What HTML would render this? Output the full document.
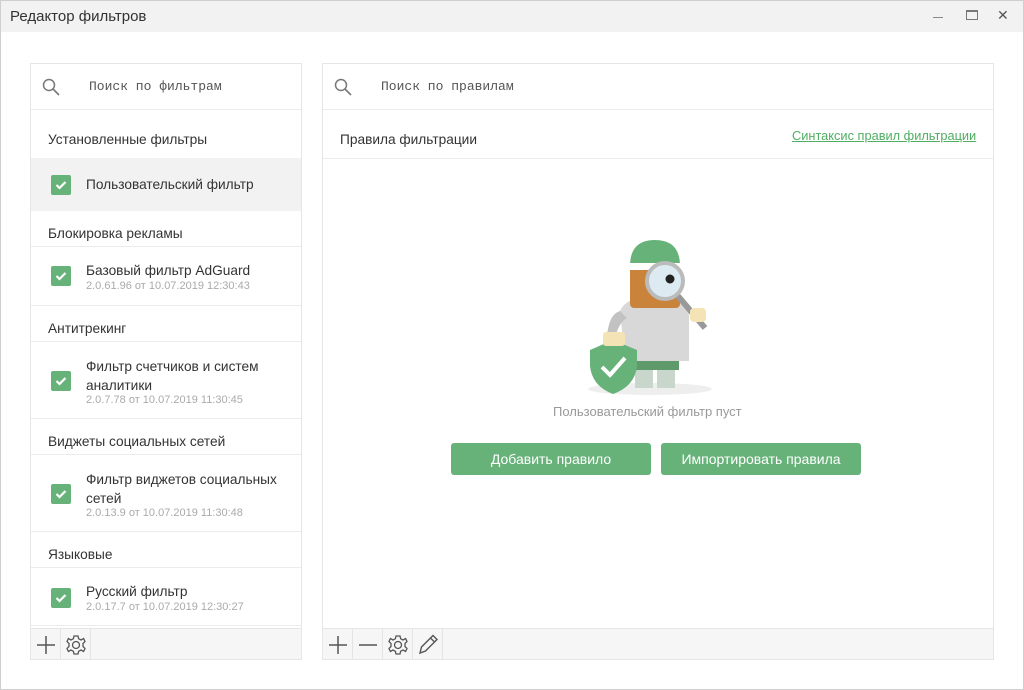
<!DOCTYPE html>
<html><head><meta charset="utf-8"><style>
*{margin:0;padding:0;box-sizing:border-box}
body{width:1024px;height:690px;position:relative;background:#fff;font-family:"Liberation Sans","Noto Sans CJK SC",sans-serif;color:#333;overflow:hidden}
.a{position:absolute}
.win{left:0;top:0;width:1024px;height:690px;border:1px solid #cfcfcf}
.title{left:1px;top:1px;width:1022px;height:31px;background:#f2f2f2}
.panel{border:1px solid #e6e6e6;background:#fff}
.hl{height:1px;background:#ececec}
.cb{width:20px;height:20px;background:#67b279;border-radius:2px}
.cb svg{position:absolute;left:4px;top:5px}
.fn{font-size:13.7px;color:#333}
.sub{font-size:11px;color:#aaa}
.grp{font-size:13.7px;color:#333}
.mono{font-family:"Liberation Mono",monospace;font-size:13px;color:#555}
.foot{background:#f6f6f6;border-top:1px solid #e6e6e6}
.btn{background:#67b279;color:#fff;font-size:14px;text-align:center;line-height:32px;border-radius:3px;height:32px}
.tb{width:30px;height:30px;border-right:1px solid #e4e4e4}
</style></head><body>
<div class="a win"></div>
<div class="a title"></div>
<div class="a" style="left:10px;top:8px;font-size:15px;color:#333">Редактор фильтров</div>
<div class="a" style="left:933px;top:17px;width:10px;height:1px;background:#888"></div>
<div class="a" style="left:966px;top:10px;width:12px;height:10px;border:1px solid #777;border-top-width:2px"></div>
<div class="a" style="left:997px;top:7px;font-size:14px;color:#555">✕</div>

<!-- left panel -->
<div class="a panel" style="left:30px;top:63px;width:272px;height:597px"></div>
<svg class="a" style="left:41px;top:77px" width="20" height="20"><circle cx="8" cy="8" r="5.5" fill="none" stroke="#777" stroke-width="1.5"/><line x1="12" y1="12" x2="18" y2="18" stroke="#777" stroke-width="1.6"/></svg>
<div class="a mono" style="left:89px;top:79px">Поиск по фильтрам</div>
<div class="a hl" style="left:31px;top:109px;width:270px"></div>
<div class="a grp" style="left:48px;top:132px">Установленные фильтры</div>
<div class="a" style="left:31px;top:158px;width:270px;height:53px;background:#f2f2f2"></div>
<div class="a cb" style="left:51px;top:175px"><svg width="12" height="10"><path d="M1.5 5 L4.5 8 L10.5 2" fill="none" stroke="#fff" stroke-width="2.2"/></svg></div>
<div class="a fn" style="left:86px;top:177px">Пользовательский фильтр</div>
<div class="a grp" style="left:48px;top:226px">Блокировка рекламы</div>
<div class="a hl" style="left:31px;top:246px;width:270px"></div>
<div class="a cb" style="left:51px;top:266px"><svg width="12" height="10"><path d="M1.5 5 L4.5 8 L10.5 2" fill="none" stroke="#fff" stroke-width="2.2"/></svg></div>
<div class="a fn" style="left:86px;top:263px">Базовый фильтр AdGuard</div>
<div class="a sub" style="left:86px;top:280px">2.0.61.96 от 10.07.2019 12:30:43</div>
<div class="a hl" style="left:31px;top:305px;width:270px"></div>
<div class="a grp" style="left:48px;top:321px">Антитрекинг</div>
<div class="a hl" style="left:31px;top:341px;width:270px"></div>
<div class="a cb" style="left:51px;top:371px"><svg width="12" height="10"><path d="M1.5 5 L4.5 8 L10.5 2" fill="none" stroke="#fff" stroke-width="2.2"/></svg></div>
<div class="a fn" style="left:86px;top:357px;line-height:19px">Фильтр счетчиков и систем<br>аналитики</div>
<div class="a sub" style="left:86px;top:394px">2.0.7.78 от 10.07.2019 11:30:45</div>
<div class="a hl" style="left:31px;top:418px;width:270px"></div>
<div class="a grp" style="left:48px;top:434px">Виджеты социальных сетей</div>
<div class="a hl" style="left:31px;top:454px;width:270px"></div>
<div class="a cb" style="left:51px;top:484px"><svg width="12" height="10"><path d="M1.5 5 L4.5 8 L10.5 2" fill="none" stroke="#fff" stroke-width="2.2"/></svg></div>
<div class="a fn" style="left:86px;top:470px;line-height:19px">Фильтр виджетов социальных<br>сетей</div>
<div class="a sub" style="left:86px;top:507px">2.0.13.9 от 10.07.2019 11:30:48</div>
<div class="a hl" style="left:31px;top:531px;width:270px"></div>
<div class="a grp" style="left:48px;top:547px">Языковые</div>
<div class="a hl" style="left:31px;top:567px;width:270px"></div>
<div class="a cb" style="left:51px;top:588px"><svg width="12" height="10"><path d="M1.5 5 L4.5 8 L10.5 2" fill="none" stroke="#fff" stroke-width="2.2"/></svg></div>
<div class="a fn" style="left:86px;top:584px">Русский фильтр</div>
<div class="a sub" style="left:86px;top:601px">2.0.17.7 от 10.07.2019 12:30:27</div>
<div class="a hl" style="left:31px;top:625px;width:270px"></div>
<div class="a foot" style="left:31px;top:628px;width:270px;height:31px"></div>
<div class="a tb" style="left:31px;top:629px"><svg width="30" height="30"><path d="M6 16 H24 M15 7 V25" stroke="#555" stroke-width="1.5"/></svg></div>
<div class="a tb" style="left:61px;top:629px"><svg width="30" height="30"><g transform="translate(15,16)" fill="none" stroke="#555" stroke-width="1.3"><circle r="3.5"/><path d="M-2 -9 H2 L2.6 -6.3 L5 -5 L7.6 -6.5 L9 -3.5 L7 -1.5 V1.5 L9 3.5 L7.6 6.5 L5 5 L2.6 6.3 L2 9 H-2 L-2.6 6.3 L-5 5 L-7.6 6.5 L-9 3.5 L-7 1.5 V-1.5 L-9 -3.5 L-7.6 -6.5 L-5 -5 L-2.6 -6.3 Z"/></g></svg></div>

<!-- right panel -->
<div class="a panel" style="left:322px;top:63px;width:672px;height:597px"></div>
<svg class="a" style="left:333px;top:77px" width="20" height="20"><circle cx="8" cy="8" r="5.5" fill="none" stroke="#777" stroke-width="1.5"/><line x1="12" y1="12" x2="18" y2="18" stroke="#777" stroke-width="1.6"/></svg>
<div class="a mono" style="left:381px;top:79px">Поиск по правилам</div>
<div class="a hl" style="left:323px;top:109px;width:670px"></div>
<div class="a grp" style="left:340px;top:132px">Правила фильтрации</div>
<div class="a" style="left:792px;top:128px;font-size:12.8px;color:#4fae63;text-decoration:underline">Синтаксис правил фильтрации</div>
<div class="a hl" style="left:323px;top:158px;width:670px"></div>

<svg class="a" style="left:585px;top:236px" width="135" height="162">
<ellipse cx="65" cy="153" rx="62" ry="6" fill="#eee"/>
<rect x="50" y="120" width="18" height="32" fill="#c9d6cc"/><rect x="72" y="120" width="18" height="32" fill="#c9d6cc"/>
<rect x="48" y="112" width="46" height="22" fill="#5f9a6a"/>
<path d="M35 75 Q40 64 55 62 H90 Q103 64 104 80 V125 H40 Z" fill="#d8d8d8"/>
<path d="M35 75 Q24 78 22 100 L30 102 Q34 86 42 82Z" fill="#c2c2c2"/>
<rect x="45" y="30" width="50" height="42" rx="4" fill="#c9833b"/>
<path d="M45 30 Q45 4 70 4 Q95 4 95 30 Z" fill="#67b279"/>
<rect x="44" y="27" width="52" height="7" fill="#fff"/>
<circle cx="80" cy="45" r="18" fill="#dcebf2" stroke="#bbb" stroke-width="4"/>
<circle cx="85" cy="43" r="4.5" fill="#222"/>
<line x1="93" y1="60" x2="120" y2="92" stroke="#999" stroke-width="6"/>
<rect x="105" y="72" width="16" height="14" rx="4" fill="#f3e3b5"/>
<path d="M5 114 L28 104 L52 114 V130 Q50 150 28 158 Q7 150 5 130Z" fill="#67b279"/>
<path d="M17 131 L25 139 L40 122" fill="none" stroke="#fff" stroke-width="4"/>
<rect x="18" y="96" width="22" height="14" rx="3" fill="#f3e3b5"/>
</svg>
<div class="a" style="left:553px;top:404px;font-size:13px;color:#999">Пользовательский фильтр пуст</div>
<div class="a btn" style="left:451px;top:443px;width:200px">Добавить правило</div>
<div class="a btn" style="left:661px;top:443px;width:200px">Импортировать правила</div>

<div class="a foot" style="left:323px;top:628px;width:670px;height:31px"></div>
<div class="a tb" style="left:323px;top:629px"><svg width="30" height="30"><path d="M6 16 H24 M15 7 V25" stroke="#555" stroke-width="1.5"/></svg></div>
<div class="a tb" style="left:353px;top:629px"><svg width="30" height="30"><path d="M6 16 H24" stroke="#555" stroke-width="1.5"/></svg></div>
<div class="a tb" style="left:383px;top:629px"><svg width="30" height="30"><g transform="translate(15,16)" fill="none" stroke="#555" stroke-width="1.3"><circle r="3.5"/><path d="M-2 -9 H2 L2.6 -6.3 L5 -5 L7.6 -6.5 L9 -3.5 L7 -1.5 V1.5 L9 3.5 L7.6 6.5 L5 5 L2.6 6.3 L2 9 H-2 L-2.6 6.3 L-5 5 L-7.6 6.5 L-9 3.5 L-7 1.5 V-1.5 L-9 -3.5 L-7.6 -6.5 L-5 -5 L-2.6 -6.3 Z"/></g></svg></div>
<div class="a tb" style="left:413px;top:629px"><svg width="30" height="30"><path d="M7 24 L8.5 18 L20 6.5 L24 10.5 L12.5 22 Z M17.5 9 L21.5 13" fill="none" stroke="#555" stroke-width="1.4"/></svg></div>
</body></html>
